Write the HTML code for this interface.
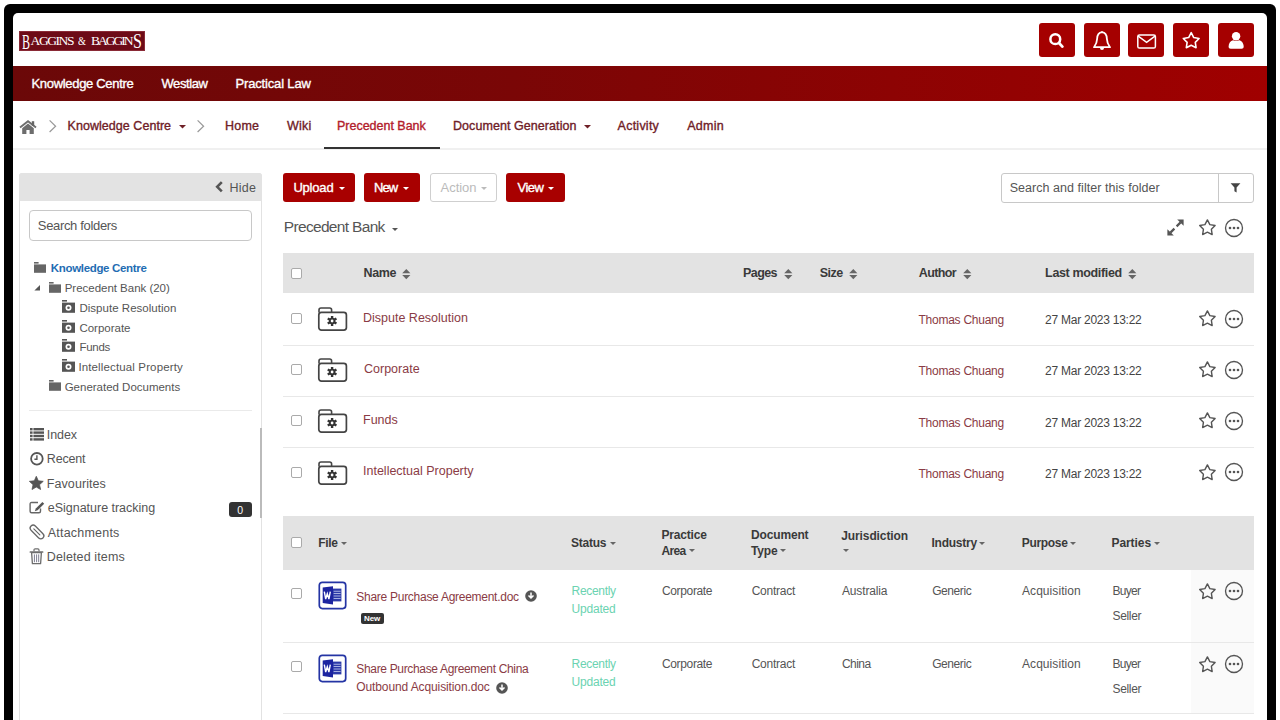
<!DOCTYPE html>
<html><head><meta charset="utf-8"><style>
html,body{margin:0;padding:0;width:1280px;height:720px;overflow:hidden;background:#fff;font-family:"Liberation Sans",sans-serif}
.frame{position:absolute;left:0;top:0;width:1280px;height:720px;overflow:hidden}
.abs{position:absolute}
.t{position:absolute;white-space:nowrap;line-height:1}
.ib{width:36px;height:34.8px;background:#a50000;border-radius:3px}
.btn{top:173px;height:29px;background:#a80000;border-radius:3px}
svg{position:absolute;overflow:visible}
</style></head><body><div class="frame">
<div class="abs" style="left:4px;top:4px;width:1272px;height:760px;background:#000;border-radius:6px"></div>
<div class="abs" style="left:13px;top:13px;width:1254px;height:760px;background:#fff;border-radius:5px"></div>
<div class="abs" style="left:19px;top:31px;width:126px;height:20px;background:#6d0b17;border:1px solid #8a2a36;box-sizing:border-box"></div>
<div class="t" style="left:22.30px;top:31.57px;font-size:20px;font-weight:400;color:#fff;letter-spacing:0.000px;font-family:'Liberation Serif',serif;transform:scaleX(0.6);transform-origin:0 0;">B</div>
<div class="t" style="left:30.60px;top:33.97px;font-size:13.5px;font-weight:400;color:#fff;letter-spacing:-1.439px;font-family:'Liberation Serif',serif;">AGGINS</div>
<div class="t" style="left:77.90px;top:35.34px;font-size:12px;font-weight:400;color:#fff;letter-spacing:0.000px;font-family:'Liberation Serif',serif;transform:scaleX(0.85);transform-origin:0 0;">&amp;</div>
<div class="t" style="left:91.00px;top:33.87px;font-size:13.5px;font-weight:400;color:#fff;letter-spacing:-1.990px;font-family:'Liberation Serif',serif;">BAGGIN</div>
<div class="t" style="left:133.00px;top:31.37px;font-size:20px;font-weight:400;color:#fff;letter-spacing:0.000px;font-family:'Liberation Serif',serif;transform:scaleX(0.8);transform-origin:0 0;">S</div>
<div class="abs ib" style="left:1039px;top:22.7px"></div>
<div class="abs ib" style="left:1084px;top:22.7px"></div>
<div class="abs ib" style="left:1128px;top:22.7px"></div>
<div class="abs ib" style="left:1173px;top:22.7px"></div>
<div class="abs ib" style="left:1218px;top:22.7px"></div>
<div class="abs" style="left:13px;top:66px;width:1254px;height:35px;background:linear-gradient(90deg,#6b0808 0%,#7a0606 40%,#a00000 100%)"></div>
<div class="t" style="left:31.50px;top:77.29px;font-size:13px;font-weight:400;color:#fff;letter-spacing:-0.315px;font-family:'Liberation Sans',sans-serif;-webkit-text-stroke:0.35px currentColor;">Knowledge Centre</div>
<div class="t" style="left:161.50px;top:77.29px;font-size:13px;font-weight:400;color:#fff;letter-spacing:-0.416px;font-family:'Liberation Sans',sans-serif;-webkit-text-stroke:0.35px currentColor;">Westlaw</div>
<div class="t" style="left:235.50px;top:77.29px;font-size:13px;font-weight:400;color:#fff;letter-spacing:-0.160px;font-family:'Liberation Sans',sans-serif;-webkit-text-stroke:0.35px currentColor;">Practical Law</div>
<div class="t" style="left:67.60px;top:119.92px;font-size:12.5px;font-weight:400;color:#6f2027;letter-spacing:0.041px;font-family:'Liberation Sans',sans-serif;-webkit-text-stroke:0.35px currentColor;">Knowledge Centre</div>
<div class="t" style="left:225.00px;top:119.92px;font-size:12.5px;font-weight:400;color:#6f2027;letter-spacing:0.203px;font-family:'Liberation Sans',sans-serif;-webkit-text-stroke:0.35px currentColor;">Home</div>
<div class="t" style="left:287.00px;top:119.92px;font-size:12.5px;font-weight:400;color:#6f2027;letter-spacing:0.225px;font-family:'Liberation Sans',sans-serif;-webkit-text-stroke:0.35px currentColor;">Wiki</div>
<div class="t" style="left:337.00px;top:119.92px;font-size:12.5px;font-weight:400;color:#b2202b;letter-spacing:-0.015px;font-family:'Liberation Sans',sans-serif;-webkit-text-stroke:0.35px currentColor;">Precedent Bank</div>
<div class="t" style="left:453.00px;top:119.92px;font-size:12.5px;font-weight:400;color:#6f2027;letter-spacing:0.065px;font-family:'Liberation Sans',sans-serif;-webkit-text-stroke:0.35px currentColor;">Document Generation</div>
<div class="t" style="left:617.60px;top:119.92px;font-size:12.5px;font-weight:400;color:#6f2027;letter-spacing:0.238px;font-family:'Liberation Sans',sans-serif;-webkit-text-stroke:0.35px currentColor;">Activity</div>
<div class="t" style="left:687.20px;top:119.92px;font-size:12.5px;font-weight:400;color:#6f2027;letter-spacing:0.255px;font-family:'Liberation Sans',sans-serif;-webkit-text-stroke:0.35px currentColor;">Admin</div>
<div class="abs" style="left:13px;top:148px;width:1254px;height:2px;background:#f0f0f0"></div>
<div class="abs" style="left:324px;top:147px;width:116px;height:2px;background:#333"></div>
<div class="abs" style="left:19px;top:173px;width:243px;height:560px;border:1px solid #e2e2e2;border-radius:3px 3px 0 0;box-sizing:border-box"></div>
<div class="abs" style="left:19px;top:173px;width:243px;height:28px;background:#e3e3e3;border-radius:3px 3px 0 0"></div>
<div class="t" style="left:229.60px;top:181.62px;font-size:12.5px;font-weight:400;color:#555;letter-spacing:0.181px;font-family:'Liberation Sans',sans-serif;">Hide</div>
<div class="abs" style="left:29px;top:210px;width:223px;height:31px;border:1px solid #c8c8c8;border-radius:4px;box-sizing:border-box"></div>
<div class="t" style="left:37.80px;top:219.29px;font-size:13px;font-weight:400;color:#555;letter-spacing:-0.332px;font-family:'Liberation Sans',sans-serif;">Search folders</div>
<div class="t" style="left:50.80px;top:262.96px;font-size:11.5px;font-weight:700;color:#1f6db3;letter-spacing:-0.331px;font-family:'Liberation Sans',sans-serif;">Knowledge Centre</div>
<div class="t" style="left:64.70px;top:283.36px;font-size:11.5px;font-weight:400;color:#555;letter-spacing:-0.019px;font-family:'Liberation Sans',sans-serif;">Precedent Bank (20)</div>
<div class="t" style="left:79.40px;top:302.96px;font-size:11.5px;font-weight:400;color:#555;letter-spacing:0.028px;font-family:'Liberation Sans',sans-serif;">Dispute Resolution</div>
<div class="t" style="left:79.40px;top:322.76px;font-size:11.5px;font-weight:400;color:#555;letter-spacing:-0.005px;font-family:'Liberation Sans',sans-serif;">Corporate</div>
<div class="t" style="left:79.40px;top:342.36px;font-size:11.5px;font-weight:400;color:#555;letter-spacing:-0.253px;font-family:'Liberation Sans',sans-serif;">Funds</div>
<div class="t" style="left:78.40px;top:362.36px;font-size:11.5px;font-weight:400;color:#555;letter-spacing:0.136px;font-family:'Liberation Sans',sans-serif;">Intellectual Property</div>
<div class="t" style="left:64.70px;top:381.96px;font-size:11.5px;font-weight:400;color:#555;letter-spacing:-0.014px;font-family:'Liberation Sans',sans-serif;">Generated Documents</div>
<div class="abs" style="left:29px;top:410px;width:223px;height:1px;background:#eaeaea"></div>
<div class="t" style="left:46.80px;top:428.82px;font-size:12.5px;font-weight:400;color:#555;letter-spacing:-0.082px;font-family:'Liberation Sans',sans-serif;">Index</div>
<div class="t" style="left:46.80px;top:453.27px;font-size:12.5px;font-weight:400;color:#555;letter-spacing:-0.187px;font-family:'Liberation Sans',sans-serif;">Recent</div>
<div class="t" style="left:46.80px;top:477.72px;font-size:12.5px;font-weight:400;color:#555;letter-spacing:0.077px;font-family:'Liberation Sans',sans-serif;">Favourites</div>
<div class="t" style="left:47.80px;top:502.17px;font-size:12.5px;font-weight:400;color:#555;letter-spacing:-0.019px;font-family:'Liberation Sans',sans-serif;">eSignature tracking</div>
<div class="t" style="left:47.80px;top:526.62px;font-size:12.5px;font-weight:400;color:#555;letter-spacing:0.207px;font-family:'Liberation Sans',sans-serif;">Attachments</div>
<div class="t" style="left:46.80px;top:551.07px;font-size:12.5px;font-weight:400;color:#555;letter-spacing:0.127px;font-family:'Liberation Sans',sans-serif;">Deleted items</div>
<div class="abs" style="left:229px;top:502px;width:23px;height:15px;background:#333;border-radius:3px"></div>
<div class="t" style="left:237.20px;top:504.61px;font-size:10.5px;font-weight:400;color:#fff;letter-spacing:0.000px;font-family:'Liberation Sans',sans-serif;">0</div>
<div class="abs" style="left:260px;top:428px;width:2px;height:90px;background:#bbb"></div>
<div class="abs btn" style="left:283px;width:72px"></div>
<div class="abs btn" style="left:364px;width:56px"></div>
<div class="abs btn" style="left:506px;width:59px"></div>
<div class="abs" style="left:430px;top:173px;width:67px;height:29px;border:1px solid #cfcfcf;border-radius:3px;box-sizing:border-box"></div>
<div class="t" style="left:293.40px;top:180.99px;font-size:13px;font-weight:400;color:#fff;letter-spacing:-0.193px;font-family:'Liberation Sans',sans-serif;-webkit-text-stroke:0.35px currentColor;">Upload</div>
<div class="t" style="left:374.00px;top:180.99px;font-size:13px;font-weight:400;color:#fff;letter-spacing:-0.934px;font-family:'Liberation Sans',sans-serif;-webkit-text-stroke:0.35px currentColor;">New</div>
<div class="t" style="left:440.60px;top:180.99px;font-size:13px;font-weight:400;color:#bbb;letter-spacing:-0.060px;font-family:'Liberation Sans',sans-serif;">Action</div>
<div class="t" style="left:517.50px;top:180.99px;font-size:13px;font-weight:400;color:#fff;letter-spacing:-0.551px;font-family:'Liberation Sans',sans-serif;-webkit-text-stroke:0.35px currentColor;">View</div>
<div class="t" style="left:283.80px;top:219.38px;font-size:15.5px;font-weight:400;color:#555;letter-spacing:-0.673px;font-family:'Liberation Sans',sans-serif;">Precedent Bank</div>
<div class="abs" style="left:1001px;top:173px;width:253px;height:30px;border:1px solid #c8c8c8;border-radius:3px;box-sizing:border-box"></div>
<div class="abs" style="left:1218px;top:173px;width:1px;height:30px;background:#c8c8c8"></div>
<div class="t" style="left:1009.70px;top:181.92px;font-size:12.5px;font-weight:400;color:#555;letter-spacing:0.046px;font-family:'Liberation Sans',sans-serif;">Search and filter this folder</div>
<div class="abs" style="left:283px;top:253px;width:971px;height:40px;background:#e3e3e3"></div>
<div class="t" style="left:363.60px;top:267.32px;font-size:12.5px;font-weight:700;color:#3a3a3a;letter-spacing:-0.431px;font-family:'Liberation Sans',sans-serif;">Name</div>
<div class="t" style="left:743.10px;top:267.32px;font-size:12.5px;font-weight:700;color:#3a3a3a;letter-spacing:-0.619px;font-family:'Liberation Sans',sans-serif;">Pages</div>
<div class="t" style="left:819.70px;top:267.32px;font-size:12.5px;font-weight:700;color:#3a3a3a;letter-spacing:-0.487px;font-family:'Liberation Sans',sans-serif;">Size</div>
<div class="t" style="left:918.80px;top:267.32px;font-size:12.5px;font-weight:700;color:#3a3a3a;letter-spacing:-0.619px;font-family:'Liberation Sans',sans-serif;">Author</div>
<div class="t" style="left:1045.10px;top:267.32px;font-size:12.5px;font-weight:700;color:#3a3a3a;letter-spacing:-0.352px;font-family:'Liberation Sans',sans-serif;">Last modified</div>
<div class="t" style="left:363.00px;top:311.62px;font-size:12.5px;font-weight:400;color:#8a3b45;letter-spacing:0.000px;font-family:'Liberation Sans',sans-serif;">Dispute Resolution</div>
<div class="t" style="left:918.50px;top:314.24px;font-size:12px;font-weight:400;color:#8a3b45;letter-spacing:-0.254px;font-family:'Liberation Sans',sans-serif;">Thomas Chuang</div>
<div class="t" style="left:1045.10px;top:314.24px;font-size:12px;font-weight:400;color:#444;letter-spacing:-0.254px;font-family:'Liberation Sans',sans-serif;">27 Mar 2023 13:22</div>
<div class="abs" style="left:283px;top:344.6px;width:971px;height:1px;background:#e8e8e8"></div>
<div class="t" style="left:364.00px;top:362.82px;font-size:12.5px;font-weight:400;color:#8a3b45;letter-spacing:0.000px;font-family:'Liberation Sans',sans-serif;">Corporate</div>
<div class="t" style="left:918.50px;top:365.44px;font-size:12px;font-weight:400;color:#8a3b45;letter-spacing:-0.254px;font-family:'Liberation Sans',sans-serif;">Thomas Chuang</div>
<div class="t" style="left:1045.10px;top:365.44px;font-size:12px;font-weight:400;color:#444;letter-spacing:-0.254px;font-family:'Liberation Sans',sans-serif;">27 Mar 2023 13:22</div>
<div class="abs" style="left:283px;top:395.6px;width:971px;height:1px;background:#e8e8e8"></div>
<div class="t" style="left:363.00px;top:414.02px;font-size:12.5px;font-weight:400;color:#8a3b45;letter-spacing:0.000px;font-family:'Liberation Sans',sans-serif;">Funds</div>
<div class="t" style="left:918.50px;top:416.64px;font-size:12px;font-weight:400;color:#8a3b45;letter-spacing:-0.254px;font-family:'Liberation Sans',sans-serif;">Thomas Chuang</div>
<div class="t" style="left:1045.10px;top:416.64px;font-size:12px;font-weight:400;color:#444;letter-spacing:-0.254px;font-family:'Liberation Sans',sans-serif;">27 Mar 2023 13:22</div>
<div class="abs" style="left:283px;top:446.6px;width:971px;height:1px;background:#e8e8e8"></div>
<div class="t" style="left:363.00px;top:465.22px;font-size:12.5px;font-weight:400;color:#8a3b45;letter-spacing:0.000px;font-family:'Liberation Sans',sans-serif;">Intellectual Property</div>
<div class="t" style="left:918.50px;top:467.84px;font-size:12px;font-weight:400;color:#8a3b45;letter-spacing:-0.254px;font-family:'Liberation Sans',sans-serif;">Thomas Chuang</div>
<div class="t" style="left:1045.10px;top:467.84px;font-size:12px;font-weight:400;color:#444;letter-spacing:-0.254px;font-family:'Liberation Sans',sans-serif;">27 Mar 2023 13:22</div>
<div class="abs" style="left:283px;top:516px;width:971px;height:54px;background:#e3e3e3"></div>
<div class="abs" style="left:1191px;top:570px;width:63px;height:144px;background:#fafafa"></div>
<div class="t" style="left:318.30px;top:537.34px;font-size:12px;font-weight:700;color:#3a3a3a;letter-spacing:-0.333px;font-family:'Liberation Sans',sans-serif;">File</div>
<div class="t" style="left:571.10px;top:537.34px;font-size:12px;font-weight:700;color:#3a3a3a;letter-spacing:-0.280px;font-family:'Liberation Sans',sans-serif;">Status</div>
<div class="t" style="left:661.40px;top:529.34px;font-size:12px;font-weight:700;color:#3a3a3a;letter-spacing:-0.175px;font-family:'Liberation Sans',sans-serif;">Practice</div>
<div class="t" style="left:661.40px;top:544.64px;font-size:12px;font-weight:700;color:#3a3a3a;letter-spacing:-0.670px;font-family:'Liberation Sans',sans-serif;">Area</div>
<div class="t" style="left:751.10px;top:529.34px;font-size:12px;font-weight:700;color:#3a3a3a;letter-spacing:-0.168px;font-family:'Liberation Sans',sans-serif;">Document</div>
<div class="t" style="left:751.10px;top:544.64px;font-size:12px;font-weight:700;color:#3a3a3a;letter-spacing:-0.181px;font-family:'Liberation Sans',sans-serif;">Type</div>
<div class="t" style="left:841.20px;top:529.74px;font-size:12px;font-weight:700;color:#3a3a3a;letter-spacing:-0.098px;font-family:'Liberation Sans',sans-serif;">Jurisdiction</div>
<div class="t" style="left:931.50px;top:537.34px;font-size:12px;font-weight:700;color:#3a3a3a;letter-spacing:-0.252px;font-family:'Liberation Sans',sans-serif;">Industry</div>
<div class="t" style="left:1021.80px;top:537.34px;font-size:12px;font-weight:700;color:#3a3a3a;letter-spacing:-0.323px;font-family:'Liberation Sans',sans-serif;">Purpose</div>
<div class="t" style="left:1111.50px;top:537.34px;font-size:12px;font-weight:700;color:#3a3a3a;letter-spacing:-0.075px;font-family:'Liberation Sans',sans-serif;">Parties</div>
<div class="t" style="left:571.60px;top:585.24px;font-size:12px;font-weight:400;color:#6bd3b1;letter-spacing:-0.312px;font-family:'Liberation Sans',sans-serif;">Recently</div>
<div class="t" style="left:571.60px;top:603.24px;font-size:12px;font-weight:400;color:#6bd3b1;letter-spacing:-0.216px;font-family:'Liberation Sans',sans-serif;">Updated</div>
<div class="t" style="left:662.00px;top:585.24px;font-size:12px;font-weight:400;color:#555;letter-spacing:-0.361px;font-family:'Liberation Sans',sans-serif;">Corporate</div>
<div class="t" style="left:751.70px;top:585.24px;font-size:12px;font-weight:400;color:#555;letter-spacing:-0.245px;font-family:'Liberation Sans',sans-serif;">Contract</div>
<div class="t" style="left:842.00px;top:585.24px;font-size:12px;font-weight:400;color:#555;letter-spacing:-0.152px;font-family:'Liberation Sans',sans-serif;">Australia</div>
<div class="t" style="left:932.20px;top:585.24px;font-size:12px;font-weight:400;color:#555;letter-spacing:-0.420px;font-family:'Liberation Sans',sans-serif;">Generic</div>
<div class="t" style="left:1022.00px;top:585.24px;font-size:12px;font-weight:400;color:#555;letter-spacing:0.064px;font-family:'Liberation Sans',sans-serif;">Acquisition</div>
<div class="t" style="left:1112.50px;top:585.04px;font-size:12px;font-weight:400;color:#555;letter-spacing:-0.713px;font-family:'Liberation Sans',sans-serif;">Buyer</div>
<div class="t" style="left:1112.50px;top:610.04px;font-size:12px;font-weight:400;color:#555;letter-spacing:-0.337px;font-family:'Liberation Sans',sans-serif;">Seller</div>
<div class="t" style="left:571.60px;top:658.24px;font-size:12px;font-weight:400;color:#6bd3b1;letter-spacing:-0.312px;font-family:'Liberation Sans',sans-serif;">Recently</div>
<div class="t" style="left:571.60px;top:676.24px;font-size:12px;font-weight:400;color:#6bd3b1;letter-spacing:-0.216px;font-family:'Liberation Sans',sans-serif;">Updated</div>
<div class="t" style="left:662.00px;top:658.24px;font-size:12px;font-weight:400;color:#555;letter-spacing:-0.361px;font-family:'Liberation Sans',sans-serif;">Corporate</div>
<div class="t" style="left:751.70px;top:658.24px;font-size:12px;font-weight:400;color:#555;letter-spacing:-0.245px;font-family:'Liberation Sans',sans-serif;">Contract</div>
<div class="t" style="left:842.00px;top:658.24px;font-size:12px;font-weight:400;color:#555;letter-spacing:-0.545px;font-family:'Liberation Sans',sans-serif;">China</div>
<div class="t" style="left:932.20px;top:658.24px;font-size:12px;font-weight:400;color:#555;letter-spacing:-0.420px;font-family:'Liberation Sans',sans-serif;">Generic</div>
<div class="t" style="left:1022.00px;top:658.24px;font-size:12px;font-weight:400;color:#555;letter-spacing:0.064px;font-family:'Liberation Sans',sans-serif;">Acquisition</div>
<div class="t" style="left:1112.50px;top:658.04px;font-size:12px;font-weight:400;color:#555;letter-spacing:-0.713px;font-family:'Liberation Sans',sans-serif;">Buyer</div>
<div class="t" style="left:1112.50px;top:683.04px;font-size:12px;font-weight:400;color:#555;letter-spacing:-0.337px;font-family:'Liberation Sans',sans-serif;">Seller</div>
<div class="t" style="left:356.30px;top:590.64px;font-size:12px;font-weight:400;color:#8a3b45;letter-spacing:-0.273px;font-family:'Liberation Sans',sans-serif;">Share Purchase Agreement.doc</div>
<div class="t" style="left:356.30px;top:662.84px;font-size:12px;font-weight:400;color:#8a3b45;letter-spacing:-0.334px;font-family:'Liberation Sans',sans-serif;">Share Purchase Agreement China</div>
<div class="t" style="left:356.30px;top:680.94px;font-size:12px;font-weight:400;color:#8a3b45;letter-spacing:-0.111px;font-family:'Liberation Sans',sans-serif;">Outbound Acquisition.doc</div>
<div class="abs" style="left:283px;top:642px;width:971px;height:1px;background:#e8e8e8"></div>
<div class="abs" style="left:283px;top:713px;width:971px;height:1px;background:#e8e8e8"></div>
<div class="abs" style="left:361px;top:613px;width:23px;height:11px;background:#333;border-radius:2px"></div>
<div class="t" style="left:364.00px;top:615.23px;font-size:8px;font-weight:700;color:#fff;letter-spacing:-0.113px;font-family:'Liberation Sans',sans-serif;">New</div>
<svg style="left:1046px;top:30.6px" width="20" height="20" viewBox="0 0 20 20"><circle cx="9.3" cy="8.2" r="4.9" fill="none" stroke="#fff" stroke-width="2.5"/><line x1="13" y1="12" x2="16.4" y2="15.6" stroke="#fff" stroke-width="2.8" stroke-linecap="round"/></svg>
<svg style="left:1092px;top:30.7px" width="20" height="20" viewBox="0 0 20 20"><path d="M10 1.2 C6.2 1.6 5.2 4.6 5.1 8 C5 11.5 4 13.6 2 16.2 L18 16.2 C16 13.6 15 11.5 14.9 8 C14.8 4.6 13.8 1.6 10 1.2 Z" fill="none" stroke="#fff" stroke-width="1.8" stroke-linejoin="round"/><path d="M8 17 A2 2 0 0 0 12 17 Z" fill="#fff"/><circle cx="10" cy="1.2" r="0.9" fill="#fff"/></svg>
<svg style="left:1136px;top:32.6px" width="22" height="17" viewBox="0 0 22 17"><rect x="1.8" y="1.9" width="17.6" height="13.2" rx="1.6" fill="none" stroke="#fff" stroke-width="1.5"/><path d="M2.2 3.2 L10.6 9.4 L19 3.2" fill="none" stroke="#fff" stroke-width="1.5"/></svg>
<svg style="left:1180px;top:29.6px" width="22" height="22" viewBox="0 0 22 22"><polygon points="11.20,2.70 13.73,7.52 19.09,8.44 15.29,12.33 16.08,17.71 11.20,15.30 6.32,17.71 7.11,12.33 3.31,8.44 8.67,7.52" fill="none" stroke="#fff" stroke-width="1.6" stroke-linejoin="round"/></svg>
<svg style="left:1226px;top:28.6px" width="20" height="22" viewBox="0 0 20 22"><circle cx="10.1" cy="7.3" r="4.2" fill="#fff"/><path d="M2.6 17.6 C2.6 14.2 4.6 11.8 7 11.3 C8.6 12.3 11.6 12.3 13.2 11.3 C15.6 11.8 17.7 14.2 17.7 17.6 C17.7 19.2 16.9 19.8 15.6 19.8 L4.7 19.8 C3.4 19.8 2.6 19.2 2.6 17.6 Z" fill="#fff"/></svg>
<svg style="left:19px;top:119.8px" width="18" height="15" viewBox="0 0 18 15"><path d="M1 7.6 L9 1.2 L17 7.6" fill="none" stroke="#6d6d6d" stroke-width="1.9" stroke-linejoin="miter"/><rect x="12.8" y="1.2" width="2.4" height="4.6" fill="#666"/><path d="M3.2 8.2 L9 3.6 L14.8 8.2 L14.8 13.9 L10.6 13.9 L10.6 10 L7.4 10 L7.4 13.9 L3.2 13.9 Z" fill="#6d6d6d"/></svg>
<svg style="left:48px;top:119px" width="10" height="15" viewBox="0 0 10 15"><path d="M1.6 1.4 L7.6 7.2 L1.6 13" fill="none" stroke="#999" stroke-width="1.2"/></svg>
<svg style="left:196px;top:119px" width="10" height="15" viewBox="0 0 10 15"><path d="M1.6 1.4 L7.6 7.2 L1.6 13" fill="none" stroke="#999" stroke-width="1.2"/></svg>
<svg style="left:179px;top:125px" width="7" height="4.5" viewBox="0 0 7 4.5"><path d="M0 0 L7 0 L3.5 3.5 Z" fill="#6f2027"/></svg>
<svg style="left:584px;top:125px" width="7" height="4.5" viewBox="0 0 7 4.5"><path d="M0 0 L7 0 L3.5 3.5 Z" fill="#6f2027"/></svg>
<svg style="left:339px;top:186.5px" width="6" height="4.0" viewBox="0 0 6 4.0"><path d="M0 0 L6 0 L3.0 3.0 Z" fill="#fff"/></svg>
<svg style="left:403px;top:186.5px" width="6" height="4.0" viewBox="0 0 6 4.0"><path d="M0 0 L6 0 L3.0 3.0 Z" fill="#fff"/></svg>
<svg style="left:481px;top:186.5px" width="6" height="4.0" viewBox="0 0 6 4.0"><path d="M0 0 L6 0 L3.0 3.0 Z" fill="#bbb"/></svg>
<svg style="left:548px;top:186.5px" width="6" height="4.0" viewBox="0 0 6 4.0"><path d="M0 0 L6 0 L3.0 3.0 Z" fill="#fff"/></svg>
<svg style="left:392px;top:228px" width="6" height="4.0" viewBox="0 0 6 4.0"><path d="M0 0 L6 0 L3.0 3.0 Z" fill="#555"/></svg>
<svg style="left:214px;top:180px" width="11" height="14" viewBox="0 0 11 14"><path d="M7.8 2.2 L3.2 6.8 L7.8 11.4" fill="none" stroke="#555" stroke-width="2.6"/></svg>
<svg style="left:33.7px;top:262px" width="12" height="11" viewBox="0 0 12 11"><rect x="0" y="0" width="4.6" height="1.6" fill="#666"/><rect x="0" y="2.4" width="12" height="8.4" fill="#666"/></svg>
<svg style="left:34px;top:285px" width="7" height="6" viewBox="0 0 7 6"><path d="M6 0 L6 5.4 L0.4 5.4 Z" fill="#555"/></svg>
<svg style="left:48.6px;top:282px" width="12" height="11" viewBox="0 0 12 11"><rect x="0" y="0" width="4.6" height="1.6" fill="#666"/><rect x="0" y="2.4" width="12" height="8.4" fill="#666"/></svg>
<svg style="left:62px;top:300.0px" width="13" height="13" viewBox="0 0 13 13"><rect x="0" y="0" width="5" height="1.6" fill="#555"/><rect x="0" y="2.6" width="13" height="10.2" fill="#555"/><circle cx="6.5" cy="7.7" r="3" fill="#fff"/><circle cx="6.5" cy="7.7" r="1.3" fill="#555"/></svg>
<svg style="left:62px;top:319.7px" width="13" height="13" viewBox="0 0 13 13"><rect x="0" y="0" width="5" height="1.6" fill="#555"/><rect x="0" y="2.6" width="13" height="10.2" fill="#555"/><circle cx="6.5" cy="7.7" r="3" fill="#fff"/><circle cx="6.5" cy="7.7" r="1.3" fill="#555"/></svg>
<svg style="left:62px;top:339.4px" width="13" height="13" viewBox="0 0 13 13"><rect x="0" y="0" width="5" height="1.6" fill="#555"/><rect x="0" y="2.6" width="13" height="10.2" fill="#555"/><circle cx="6.5" cy="7.7" r="3" fill="#fff"/><circle cx="6.5" cy="7.7" r="1.3" fill="#555"/></svg>
<svg style="left:62px;top:359.1px" width="13" height="13" viewBox="0 0 13 13"><rect x="0" y="0" width="5" height="1.6" fill="#555"/><rect x="0" y="2.6" width="13" height="10.2" fill="#555"/><circle cx="6.5" cy="7.7" r="3" fill="#fff"/><circle cx="6.5" cy="7.7" r="1.3" fill="#555"/></svg>
<svg style="left:48.6px;top:380px" width="12" height="11" viewBox="0 0 12 11"><rect x="0" y="0" width="4.6" height="1.6" fill="#666"/><rect x="0" y="2.4" width="12" height="8.4" fill="#666"/></svg>
<svg style="left:29.5px;top:428px" width="14" height="13" viewBox="0 0 14 13"><g fill="#555"><rect x="0" y="0" width="14" height="2.4"/><rect x="0" y="3.4" width="14" height="2.4"/><rect x="0" y="6.8" width="14" height="2.4"/><rect x="0" y="10.2" width="14" height="2.4"/></g><g fill="#fff"><rect x="2.6" y="0" width="0.8" height="13"/></g></svg>
<svg style="left:29.5px;top:452px" width="14" height="14" viewBox="0 0 14 14"><circle cx="6.9" cy="6.8" r="5.8" fill="none" stroke="#555" stroke-width="1.8"/><path d="M6.9 3.2 L6.9 7.2 L4.4 7.2" fill="none" stroke="#555" stroke-width="1.4"/></svg>
<svg style="left:29px;top:476px" width="15" height="14" viewBox="0 0 15 14"><polygon points="7.30,0.30 9.30,4.85 14.24,5.34 10.53,8.65 11.59,13.51 7.30,11.00 3.01,13.51 4.07,8.65 0.36,5.34 5.30,4.85" fill="#555" stroke="#555" stroke-width="0.8" stroke-linejoin="round"/></svg>
<svg style="left:28.5px;top:500.5px" width="16" height="13" viewBox="0 0 16 13"><path d="M9 1.5 L2.6 1.5 C1.6 1.5 1.1 2 1.1 3 L1.1 10.2 C1.1 11.2 1.6 11.7 2.6 11.7 L10 11.7 C11 11.7 11.5 11.2 11.5 10.2 L11.5 7.6" fill="none" stroke="#666" stroke-width="1.4"/><path d="M13.4 0.9 L15.2 2.7 L8.6 9.3 L5.8 10.2 L6.8 7.5 Z" fill="#555"/></svg>
<svg style="left:30px;top:525px" width="14" height="14" viewBox="0 0 14 14"><g transform="rotate(-45 7 7)"><rect x="4" y="-1.4" width="6" height="16.8" rx="3" fill="none" stroke="#666" stroke-width="1.3"/><path d="M7 2.5 L7 11" stroke="#666" stroke-width="1.2" stroke-linecap="round"/></g></svg>
<svg style="left:29px;top:548px" width="15" height="17" viewBox="0 0 15 17"><path d="M2.6 4.6 L12.4 4.6 L11.6 15.6 L3.4 15.6 Z" fill="none" stroke="#6d6d6d" stroke-width="1.3" stroke-linejoin="round"/><rect x="0.6" y="3.2" width="13.8" height="1.6" rx="0.6" fill="#6d6d6d"/><path d="M5 3.2 L5 2 C5 1.3 5.4 0.9 6.1 0.9 L8.9 0.9 C9.6 0.9 10 1.3 10 2 L10 3.2" fill="none" stroke="#6d6d6d" stroke-width="1.2"/><g fill="#8a8a9a"><rect x="4.9" y="6.4" width="1.1" height="7.8"/><rect x="7" y="6.4" width="1.1" height="7.8"/><rect x="9.1" y="6.4" width="1.1" height="7.8"/></g></svg>
<svg style="left:1229px;top:181px" width="13" height="13" viewBox="0 0 13 13"><path d="M1.6 2.2 L11.4 2.2 L7.6 6.6 L7.6 11.6 L5.4 10.2 L5.4 6.6 Z" fill="#444"/></svg>
<svg style="left:1166px;top:218px" width="19" height="19" viewBox="0 0 19 19"><g fill="#555"><path d="M17.6 1.4 L17.6 7.8 L11.2 1.4 Z"/><path d="M1.4 17.6 L1.4 11.2 L7.8 17.6 Z"/></g><path d="M14.6 4.4 L10.6 8.4 M4.4 14.6 L8.4 10.6" stroke="#555" stroke-width="2.2"/></svg>
<svg style="left:1197.5px;top:217.5px" width="19" height="19" viewBox="0 0 19 19"><polygon points="9.40,1.90 11.87,6.60 17.10,7.50 13.39,11.30 14.16,16.55 9.40,14.20 4.64,16.55 5.41,11.30 1.70,7.50 6.93,6.60" fill="none" stroke="#555" stroke-width="1.4" stroke-linejoin="round"/></svg>
<svg style="left:1224.1px;top:217.5px" width="20" height="20" viewBox="0 0 20 20"><circle cx="10" cy="10" r="8.5" fill="none" stroke="#555" stroke-width="1.35"/><g fill="#555"><circle cx="6" cy="10" r="1.3"/><circle cx="10" cy="10" r="1.3"/><circle cx="14" cy="10" r="1.3"/></g></svg>
<div class="abs" style="left:291px;top:268px;width:11px;height:11px;border:1px solid #aaa;border-radius:2px;box-sizing:border-box;background:#fff"></div>
<div class="abs" style="left:291px;top:536.5px;width:11px;height:11px;border:1px solid #aaa;border-radius:2px;box-sizing:border-box;background:#fff"></div>
<div class="abs" style="left:291px;top:313px;width:11px;height:11px;border:1px solid #aaa;border-radius:2px;box-sizing:border-box;background:#fff"></div>
<svg style="left:317px;top:307.0px" width="31" height="25" viewBox="0 0 31 25"><path d="M2 5.4 L2 3 C2 1.8 2.8 1 4 1 L12.6 1 C13.8 1 14.6 1.8 14.6 3 L14.6 5.4" fill="none" stroke="#444" stroke-width="1.6"/><rect x="1.8" y="5.4" width="27.6" height="17.8" rx="2.6" fill="none" stroke="#444" stroke-width="1.7"/><g transform="translate(15.1,14)"><circle r="3.2" fill="#333"/><rect x="-1.2" y="-5" width="2.4" height="10" fill="#333" transform="rotate(0)"/><rect x="-1.2" y="-5" width="2.4" height="10" fill="#333" transform="rotate(60)"/><rect x="-1.2" y="-5" width="2.4" height="10" fill="#333" transform="rotate(120)"/><circle r="1.4" fill="#fff"/></g></svg>
<svg style="left:1197.5px;top:309.0px" width="19" height="19" viewBox="0 0 19 19"><polygon points="9.40,1.90 11.87,6.60 17.10,7.50 13.39,11.30 14.16,16.55 9.40,14.20 4.64,16.55 5.41,11.30 1.70,7.50 6.93,6.60" fill="none" stroke="#555" stroke-width="1.4" stroke-linejoin="round"/></svg>
<svg style="left:1224.1px;top:308.5px" width="20" height="20" viewBox="0 0 20 20"><circle cx="10" cy="10" r="8.5" fill="none" stroke="#555" stroke-width="1.35"/><g fill="#555"><circle cx="6" cy="10" r="1.3"/><circle cx="10" cy="10" r="1.3"/><circle cx="14" cy="10" r="1.3"/></g></svg>
<div class="abs" style="left:291px;top:364px;width:11px;height:11px;border:1px solid #aaa;border-radius:2px;box-sizing:border-box;background:#fff"></div>
<svg style="left:317px;top:358.2px" width="31" height="25" viewBox="0 0 31 25"><path d="M2 5.4 L2 3 C2 1.8 2.8 1 4 1 L12.6 1 C13.8 1 14.6 1.8 14.6 3 L14.6 5.4" fill="none" stroke="#444" stroke-width="1.6"/><rect x="1.8" y="5.4" width="27.6" height="17.8" rx="2.6" fill="none" stroke="#444" stroke-width="1.7"/><g transform="translate(15.1,14)"><circle r="3.2" fill="#333"/><rect x="-1.2" y="-5" width="2.4" height="10" fill="#333" transform="rotate(0)"/><rect x="-1.2" y="-5" width="2.4" height="10" fill="#333" transform="rotate(60)"/><rect x="-1.2" y="-5" width="2.4" height="10" fill="#333" transform="rotate(120)"/><circle r="1.4" fill="#fff"/></g></svg>
<svg style="left:1197.5px;top:360.2px" width="19" height="19" viewBox="0 0 19 19"><polygon points="9.40,1.90 11.87,6.60 17.10,7.50 13.39,11.30 14.16,16.55 9.40,14.20 4.64,16.55 5.41,11.30 1.70,7.50 6.93,6.60" fill="none" stroke="#555" stroke-width="1.4" stroke-linejoin="round"/></svg>
<svg style="left:1224.1px;top:359.7px" width="20" height="20" viewBox="0 0 20 20"><circle cx="10" cy="10" r="8.5" fill="none" stroke="#555" stroke-width="1.35"/><g fill="#555"><circle cx="6" cy="10" r="1.3"/><circle cx="10" cy="10" r="1.3"/><circle cx="14" cy="10" r="1.3"/></g></svg>
<div class="abs" style="left:291px;top:415px;width:11px;height:11px;border:1px solid #aaa;border-radius:2px;box-sizing:border-box;background:#fff"></div>
<svg style="left:317px;top:409.4px" width="31" height="25" viewBox="0 0 31 25"><path d="M2 5.4 L2 3 C2 1.8 2.8 1 4 1 L12.6 1 C13.8 1 14.6 1.8 14.6 3 L14.6 5.4" fill="none" stroke="#444" stroke-width="1.6"/><rect x="1.8" y="5.4" width="27.6" height="17.8" rx="2.6" fill="none" stroke="#444" stroke-width="1.7"/><g transform="translate(15.1,14)"><circle r="3.2" fill="#333"/><rect x="-1.2" y="-5" width="2.4" height="10" fill="#333" transform="rotate(0)"/><rect x="-1.2" y="-5" width="2.4" height="10" fill="#333" transform="rotate(60)"/><rect x="-1.2" y="-5" width="2.4" height="10" fill="#333" transform="rotate(120)"/><circle r="1.4" fill="#fff"/></g></svg>
<svg style="left:1197.5px;top:411.4px" width="19" height="19" viewBox="0 0 19 19"><polygon points="9.40,1.90 11.87,6.60 17.10,7.50 13.39,11.30 14.16,16.55 9.40,14.20 4.64,16.55 5.41,11.30 1.70,7.50 6.93,6.60" fill="none" stroke="#555" stroke-width="1.4" stroke-linejoin="round"/></svg>
<svg style="left:1224.1px;top:410.9px" width="20" height="20" viewBox="0 0 20 20"><circle cx="10" cy="10" r="8.5" fill="none" stroke="#555" stroke-width="1.35"/><g fill="#555"><circle cx="6" cy="10" r="1.3"/><circle cx="10" cy="10" r="1.3"/><circle cx="14" cy="10" r="1.3"/></g></svg>
<div class="abs" style="left:291px;top:467px;width:11px;height:11px;border:1px solid #aaa;border-radius:2px;box-sizing:border-box;background:#fff"></div>
<svg style="left:317px;top:460.6px" width="31" height="25" viewBox="0 0 31 25"><path d="M2 5.4 L2 3 C2 1.8 2.8 1 4 1 L12.6 1 C13.8 1 14.6 1.8 14.6 3 L14.6 5.4" fill="none" stroke="#444" stroke-width="1.6"/><rect x="1.8" y="5.4" width="27.6" height="17.8" rx="2.6" fill="none" stroke="#444" stroke-width="1.7"/><g transform="translate(15.1,14)"><circle r="3.2" fill="#333"/><rect x="-1.2" y="-5" width="2.4" height="10" fill="#333" transform="rotate(0)"/><rect x="-1.2" y="-5" width="2.4" height="10" fill="#333" transform="rotate(60)"/><rect x="-1.2" y="-5" width="2.4" height="10" fill="#333" transform="rotate(120)"/><circle r="1.4" fill="#fff"/></g></svg>
<svg style="left:1197.5px;top:462.6px" width="19" height="19" viewBox="0 0 19 19"><polygon points="9.40,1.90 11.87,6.60 17.10,7.50 13.39,11.30 14.16,16.55 9.40,14.20 4.64,16.55 5.41,11.30 1.70,7.50 6.93,6.60" fill="none" stroke="#555" stroke-width="1.4" stroke-linejoin="round"/></svg>
<svg style="left:1224.1px;top:462.1px" width="20" height="20" viewBox="0 0 20 20"><circle cx="10" cy="10" r="8.5" fill="none" stroke="#555" stroke-width="1.35"/><g fill="#555"><circle cx="6" cy="10" r="1.3"/><circle cx="10" cy="10" r="1.3"/><circle cx="14" cy="10" r="1.3"/></g></svg>
<svg style="left:402px;top:268.6px" width="9" height="11" viewBox="0 0 9 11"><path d="M0.2 4.2 L4.3 0 L8.4 4.2 Z M0.2 6 L8.4 6 L4.3 10.2 Z" fill="#666"/></svg>
<svg style="left:783.8px;top:268.6px" width="9" height="11" viewBox="0 0 9 11"><path d="M0.2 4.2 L4.3 0 L8.4 4.2 Z M0.2 6 L8.4 6 L4.3 10.2 Z" fill="#666"/></svg>
<svg style="left:849px;top:268.6px" width="9" height="11" viewBox="0 0 9 11"><path d="M0.2 4.2 L4.3 0 L8.4 4.2 Z M0.2 6 L8.4 6 L4.3 10.2 Z" fill="#666"/></svg>
<svg style="left:963px;top:268.6px" width="9" height="11" viewBox="0 0 9 11"><path d="M0.2 4.2 L4.3 0 L8.4 4.2 Z M0.2 6 L8.4 6 L4.3 10.2 Z" fill="#666"/></svg>
<svg style="left:1128px;top:268.6px" width="9" height="11" viewBox="0 0 9 11"><path d="M0.2 4.2 L4.3 0 L8.4 4.2 Z M0.2 6 L8.4 6 L4.3 10.2 Z" fill="#666"/></svg>
<svg style="left:340.5px;top:541.5px" width="6" height="4.0" viewBox="0 0 6 4.0"><path d="M0 0 L6 0 L3.0 3.0 Z" fill="#666"/></svg>
<svg style="left:609.5px;top:541.5px" width="6" height="4.0" viewBox="0 0 6 4.0"><path d="M0 0 L6 0 L3.0 3.0 Z" fill="#666"/></svg>
<svg style="left:689px;top:548.5px" width="6" height="4.0" viewBox="0 0 6 4.0"><path d="M0 0 L6 0 L3.0 3.0 Z" fill="#666"/></svg>
<svg style="left:780px;top:548.5px" width="6" height="4.0" viewBox="0 0 6 4.0"><path d="M0 0 L6 0 L3.0 3.0 Z" fill="#666"/></svg>
<svg style="left:843px;top:549px" width="6" height="4.0" viewBox="0 0 6 4.0"><path d="M0 0 L6 0 L3.0 3.0 Z" fill="#666"/></svg>
<svg style="left:978.5px;top:542px" width="6" height="4.0" viewBox="0 0 6 4.0"><path d="M0 0 L6 0 L3.0 3.0 Z" fill="#666"/></svg>
<svg style="left:1069.5px;top:542px" width="6" height="4.0" viewBox="0 0 6 4.0"><path d="M0 0 L6 0 L3.0 3.0 Z" fill="#666"/></svg>
<svg style="left:1153.5px;top:542px" width="6" height="4.0" viewBox="0 0 6 4.0"><path d="M0 0 L6 0 L3.0 3.0 Z" fill="#666"/></svg>
<div class="abs" style="left:291px;top:588px;width:11px;height:11px;border:1px solid #aaa;border-radius:2px;box-sizing:border-box;background:#fff"></div>
<svg style="left:318px;top:580.5px" width="29" height="29" viewBox="0 0 29 29"><rect x="1.3" y="1.3" width="26.4" height="26.3" rx="3" fill="none" stroke="#2434a4" stroke-width="1.7"/><path d="M4.7 6.6 L15 5.2 L15 23.4 L4.7 22 Z" fill="#1c24a0"/><rect x="15" y="7.6" width="8.4" height="12.8" fill="#2c3aa8"/><g fill="#c9cdf0"><rect x="15.6" y="9.8" width="7" height="0.8"/><rect x="15.6" y="12.2" width="7" height="0.8"/><rect x="15.6" y="14.6" width="7" height="0.8"/><rect x="15.6" y="17" width="7" height="0.8"/></g><path d="M6.3 10.6 L7.7 18 L9.3 12.6 L10.9 18 L12.3 10.6" fill="none" stroke="#fff" stroke-width="1.4"/></svg>
<svg style="left:1197.5px;top:581.5px" width="19" height="19" viewBox="0 0 19 19"><polygon points="9.40,1.90 11.87,6.60 17.10,7.50 13.39,11.30 14.16,16.55 9.40,14.20 4.64,16.55 5.41,11.30 1.70,7.50 6.93,6.60" fill="none" stroke="#555" stroke-width="1.4" stroke-linejoin="round"/></svg>
<svg style="left:1224.1px;top:581.2px" width="20" height="20" viewBox="0 0 20 20"><circle cx="10" cy="10" r="8.5" fill="none" stroke="#555" stroke-width="1.35"/><g fill="#555"><circle cx="6" cy="10" r="1.3"/><circle cx="10" cy="10" r="1.3"/><circle cx="14" cy="10" r="1.3"/></g></svg>
<div class="abs" style="left:291px;top:661px;width:11px;height:11px;border:1px solid #aaa;border-radius:2px;box-sizing:border-box;background:#fff"></div>
<svg style="left:318px;top:653.5px" width="29" height="29" viewBox="0 0 29 29"><rect x="1.3" y="1.3" width="26.4" height="26.3" rx="3" fill="none" stroke="#2434a4" stroke-width="1.7"/><path d="M4.7 6.6 L15 5.2 L15 23.4 L4.7 22 Z" fill="#1c24a0"/><rect x="15" y="7.6" width="8.4" height="12.8" fill="#2c3aa8"/><g fill="#c9cdf0"><rect x="15.6" y="9.8" width="7" height="0.8"/><rect x="15.6" y="12.2" width="7" height="0.8"/><rect x="15.6" y="14.6" width="7" height="0.8"/><rect x="15.6" y="17" width="7" height="0.8"/></g><path d="M6.3 10.6 L7.7 18 L9.3 12.6 L10.9 18 L12.3 10.6" fill="none" stroke="#fff" stroke-width="1.4"/></svg>
<svg style="left:1197.5px;top:654.5px" width="19" height="19" viewBox="0 0 19 19"><polygon points="9.40,1.90 11.87,6.60 17.10,7.50 13.39,11.30 14.16,16.55 9.40,14.20 4.64,16.55 5.41,11.30 1.70,7.50 6.93,6.60" fill="none" stroke="#555" stroke-width="1.4" stroke-linejoin="round"/></svg>
<svg style="left:1224.1px;top:654.2px" width="20" height="20" viewBox="0 0 20 20"><circle cx="10" cy="10" r="8.5" fill="none" stroke="#555" stroke-width="1.35"/><g fill="#555"><circle cx="6" cy="10" r="1.3"/><circle cx="10" cy="10" r="1.3"/><circle cx="14" cy="10" r="1.3"/></g></svg>
<svg style="left:525px;top:590.3px" width="12" height="12" viewBox="0 0 12 12"><circle cx="6" cy="6" r="5.8" fill="#555"/><path d="M6 2.6 L6 7.6 M3.5 5.4 L6 8 L8.5 5.4" fill="none" stroke="#fff" stroke-width="1.5"/></svg>
<svg style="left:496px;top:681.6px" width="12" height="12" viewBox="0 0 12 12"><circle cx="6" cy="6" r="5.8" fill="#555"/><path d="M6 2.6 L6 7.6 M3.5 5.4 L6 8 L8.5 5.4" fill="none" stroke="#fff" stroke-width="1.5"/></svg>
</div></body></html>
